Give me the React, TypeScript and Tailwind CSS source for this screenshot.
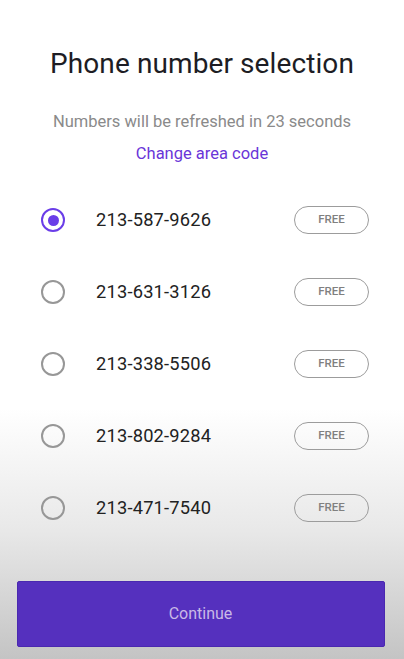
import React from "react";

const numbers = ["213-587-9626", "213-631-3126", "213-338-5506", "213-802-9284", "213-471-7540"];

export default function App() {
  return (
    <div
      className="w-[404px] h-[659px] flex flex-col items-center bg-[linear-gradient(to_bottom,#ffffff_0%,#ffffff_62%,#e9e9e9_80%,#c4c4c4_100%)]"
      style={{ fontFamily: "Roboto, 'Liberation Sans', sans-serif" }}
    >
      <h1 className="mt-[46px] text-[28px] leading-[36px] text-[#1d1d24] tracking-[0.1px]">Phone number selection</h1>
      <p className="mt-[30px] text-[16.5px] leading-[20px] text-[#8a8a8a]">Numbers will be refreshed in 23 seconds</p>
      <p className="mt-[12px] text-[16.5px] leading-[20px] text-[#6a35d8]">Change area code</p>
      <div className="mt-[20px] w-full flex flex-col">
        {numbers.map((n, i) => (
          <div key={n} className="h-[72px] flex items-center pl-[41px] pr-[35px]">
            {i === 0 ? (
              <div className="w-[24px] h-[24px] rounded-full border-[2.5px] border-[#6a3de8] flex items-center justify-center">
                <div className="w-[11px] h-[11px] rounded-full bg-[#6a3de8]" />
              </div>
            ) : (
              <div className="w-[24px] h-[24px] rounded-full border-[2px] border-[#979797]" />
            )}
            <span className="ml-[31px] text-[18.3px] text-[#222] tracking-[0.2px]">{n}</span>
            <div className="ml-auto w-[75px] h-[28px] rounded-full border-[1.5px] border-[#9c9c9c] flex items-center justify-center text-[11.5px] font-medium text-[#808080]">
              FREE
            </div>
          </div>
        ))}
      </div>
      <div className="mt-[37px] w-[368px] h-[66px] rounded-[2px] bg-[#5530be] border border-[#4a28b0] flex items-center justify-center text-[16px] text-[#c9b9e6] ml-[-3px]">
        Continue
      </div>
    </div>
  );
}
